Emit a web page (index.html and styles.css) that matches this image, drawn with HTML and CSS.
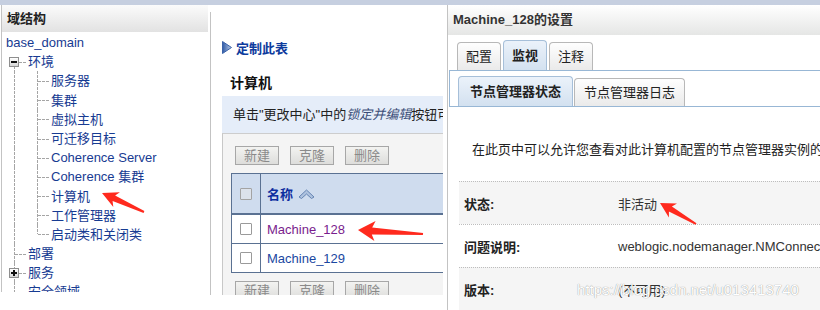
FILE: index.html
```html
<!DOCTYPE html>
<html>

<head>
  <meta charset="utf-8">
  <title>Machine_128的设置</title>
  <link rel="stylesheet" href="styles.css">
</head>

<body>
  <div class="console-top"></div>
  <div class="console">

    <div class="domain-tree">
      <h2 class="domain-tree-header">域结构</h2>
      <ul class="tree">
        <li class="tree-row"><a class="tree-root">base_domain</a></li>
        <li class="tree-row"><span class="tree-indent"></span><span class="tree-join tree-first"><span class="tree-box tree-minus"></span></span><a>环境</a></li>
        <li class="tree-row"><span class="tree-indent"></span><span class="tree-pipe"></span><span class="tree-join"></span><a>服务器</a></li>
        <li class="tree-row"><span class="tree-indent"></span><span class="tree-pipe"></span><span class="tree-join"></span><a>集群</a></li>
        <li class="tree-row"><span class="tree-indent"></span><span class="tree-pipe"></span><span class="tree-join"></span><a>虚拟主机</a></li>
        <li class="tree-row"><span class="tree-indent"></span><span class="tree-pipe"></span><span class="tree-join"></span><a>可迁移目标</a></li>
        <li class="tree-row"><span class="tree-indent"></span><span class="tree-pipe"></span><span class="tree-join"></span><a>Coherence Server</a></li>
        <li class="tree-row"><span class="tree-indent"></span><span class="tree-pipe"></span><span class="tree-join"></span><a>Coherence 集群</a></li>
        <li class="tree-row"><span class="tree-indent"></span><span class="tree-pipe"></span><span class="tree-join"></span><a>计算机</a></li>
        <li class="tree-row"><span class="tree-indent"></span><span class="tree-pipe"></span><span class="tree-join"></span><a>工作管理器</a></li>
        <li class="tree-row"><span class="tree-indent"></span><span class="tree-pipe"></span><span class="tree-join tree-last"></span><a>启动类和关闭类</a></li>
        <li class="tree-row"><span class="tree-indent"></span><span class="tree-join"></span><a>部署</a></li>
        <li class="tree-row"><span class="tree-indent"></span><span class="tree-join"><span class="tree-box tree-plus"></span></span><a>服务</a></li>
        <li class="tree-row"><span class="tree-indent"></span><span class="tree-join"></span><a>安全领域</a></li>
      </ul>
    </div>

    <div class="table-pane">
      <div class="customize">
        <svg width="10" height="13" viewBox="0 0 10 13">
          <defs>
            <linearGradient id="tri" x1="0" y1="0" x2="1" y2="0">
              <stop offset="0" stop-color="#2f5aa6" />
              <stop offset="1" stop-color="#b9cbe6" />
            </linearGradient>
          </defs>
          <polygon points="0.5,0.5 9.5,6.5 0.5,12.5" fill="url(#tri)" stroke="#3a62a9" stroke-width="1" />
        </svg>
        定制此表
      </div>
      <div class="table-title">计算机</div>
      <div class="table-body">
        <div class="info-bar">单击&quot;更改中心&quot;中的<em>锁定并编辑</em>按钮可以修改此表中的设置</div>
        <div class="table-panel">
          <div class="buttons">
            <button>新建</button>
            <button>克隆</button>
            <button>删除</button>
          </div>
          <div class="grid">
            <div class="grid-head">
              <div class="grid-check"><span class="check check-off"></span></div>
              <div class="grid-name">名称
                <svg class="sort" width="17" height="10" viewBox="0 0 17 10">
                  <path d="M1 8 L8.5 1 L16 8 L13.5 9.5 L8.5 5 L3.5 9.5 Z" fill="#aec2de" stroke="#6685b3" stroke-width="1" stroke-linejoin="round" />
                </svg>
              </div>
            </div>
            <div class="grid-row">
              <div class="grid-check"><span class="check"></span></div>
              <div class="grid-name"><a class="visited">Machine_128</a></div>
            </div>
            <div class="grid-row">
              <div class="grid-check"><span class="check"></span></div>
              <div class="grid-name"><a>Machine_129</a></div>
            </div>
          </div>
          <div class="buttons">
            <button>新建</button>
            <button>克隆</button>
            <button>删除</button>
          </div>
        </div>
      </div>
    </div>

    <div class="settings-pane">
      <div class="settings-header">Machine_128的设置</div>
      <div class="tabs">
        <div class="tab">配置</div>
        <div class="tab tab-active">监视</div>
        <div class="tab">注释</div>
      </div>
      <div class="subtabs">
        <div class="subtab subtab-active">节点管理器状态</div>
        <div class="subtab">节点管理器日志</div>
      </div>
      <div class="settings-intro">在此页中可以允许您查看对此计算机配置的节点管理器实例的状态。</div>
      <div class="props">
        <div class="prop prop-alt"><span class="prop-label">状态:</span><span>非活动</span></div>
        <div class="prop"><span class="prop-label">问题说明:</span><span>weblogic.nodemanager.NMConnectException</span></div>
        <div class="prop prop-alt"><span class="prop-label">版本:</span><span>(不可用)</span></div>
      </div>
    </div>

  </div>

  <div class="watermark">https://blog.csdn.net/u013413740</div>

  <svg class="marks" width="820" height="310" viewBox="0 0 820 310">
    <polygon points="102,193 119.9,192.3 115.1,195.6 144.4,211.1 143.6,212.9 112.6,201.1 113.3,206.9" />
    <polygon points="358,230 375.6,221.1 372.2,227.4 423.1,233 422.9,235 371.8,234.4 374.4,241" />
    <polygon points="660,203 677,203.6 671.9,206.5 696.5,223.2 695.5,224.8 668.9,211.6 668.9,217.5" />
  </svg>
</body>

</html>
```

FILE: styles.css
```css
html,body { padding: 0; margin: 0; }

body {
  position: relative;
  width: 820px;
  height: 310px;
  overflow: hidden;
  background: #fff;
  color: #222;
  font-family: "Liberation Sans", "Noto Sans CJK SC", sans-serif;
  font-size: 13px;
}

a {
  color: #173b92;
  text-decoration: none;
}

.console-top {
  height: 5px;
  background: #c6cfe0;
}

.console {
  display: flex;
  align-items: flex-start;
}

/* domain tree */

.domain-tree {
  margin-left: 1px;
  width: 206px;
  height: 287px;
  border-left: 1px solid #c3c3c3;
  overflow: hidden;
}

.domain-tree-header {
  margin: 0;
  height: 27px;
  line-height: 27px;
  padding-left: 5px;
  font-size: 13px;
  font-weight: bold;
  color: #222;
  background: linear-gradient(#fbfbfb, #e2e2e2);
}

.tree {
  list-style: none;
  margin: 0;
  padding: 1px 0 0 0;
}

.tree-row {
  display: flex;
  height: 19.2px;
  line-height: 19px;
  white-space: nowrap;
}

.tree-root {
  padding-left: 4px;
}

.tree-indent {
  flex: none;
  width: 12px;
}

.tree-pipe,
.tree-join {
  flex: none;
  position: relative;
}

.tree-pipe { width: 23px; }
.tree-join { width: 14px; }

.tree-pipe::before,
.tree-join::before {
  content: "";
  position: absolute;
  left: 0;
  top: 0;
  bottom: 0;
  width: 1px;
  background: repeating-linear-gradient(to bottom, #a5a5a5 0 3px, transparent 3px 4px);
}

.tree-join::after {
  content: "";
  position: absolute;
  left: 1px;
  width: 11px;
  top: 50%;
  height: 1px;
  background: repeating-linear-gradient(to right, #a5a5a5 0 3px, transparent 3px 4px);
}

.tree-first::before { top: 50%; }
.tree-last::before { bottom: 50%; }

.tree-box {
  position: absolute;
  z-index: 1;
  left: -5px;
  top: calc(50% - 5px);
  width: 10px;
  height: 10px;
  box-sizing: border-box;
  border: 1px solid #8e8e8e;
  background: linear-gradient(#fff, #d6d6d6);
}

.tree-box::before {
  content: "";
  position: absolute;
  left: 1px;
  right: 1px;
  top: 3px;
  height: 2px;
  background: #111;
}

.tree-plus::after {
  content: "";
  position: absolute;
  top: 1px;
  bottom: 1px;
  left: 3px;
  width: 2px;
  background: #111;
}

/* machine table */

.table-pane {
  margin-left: 2px;
  margin-top: 7px;
  width: 236px;
  height: 283px;
  border-left: 1px solid #c3c3c3;
}

.customize {
  display: flex;
  align-items: center;
  gap: 4px;
  margin: 27px 0 0 11px;
  height: 16px;
  font-weight: bold;
  color: #0e3b9d;
}

.table-title {
  margin: 19px 0 0 19px;
  font-size: 14px;
  line-height: 18px;
  font-weight: bold;
  color: #111;
}

.table-body {
  margin: 4px 0 0 11px;
  width: 221px;
}

.info-bar {
  height: 37px;
  line-height: 37px;
  padding-left: 11px;
  background: #e5edf9;
  white-space: nowrap;
  overflow: hidden;
}

.info-bar em {
  color: #3b4d78;
}

.table-panel {
  box-sizing: border-box;
  height: 162px;
  padding: 12px 0 0 8px;
  border-top: 1px solid #cdcdcd;
  border-left: 1px solid #c8c8c8;
  background: #f4f4f4;
  overflow: hidden;
}

.buttons {
  display: flex;
  gap: 11px;
  padding-left: 4px;
}

.buttons button {
  width: 44px;
  height: 19px;
  padding: 0;
  border: 1px solid #a7a7a7;
  background: linear-gradient(#f3f3f1, #dddddb);
  color: #8a8a8a;
  font: inherit;
  line-height: 17px;
}

.grid {
  width: 400px;
  margin: 8px 0;
  border: 1px solid #5a7192;
}

.grid-head {
  display: flex;
  height: 39px;
  background: #cfdcee;
  border-bottom: 2px solid #5a7192;
}

.grid-row {
  display: flex;
  height: 28px;
  background: #fff;
}

.grid-row + .grid-row {
  border-top: 1px solid #5a7192;
}

.grid-check {
  flex: none;
  width: 28px;
  border-right: 1px solid #5a7192;
  display: flex;
  align-items: center;
  justify-content: center;
}

.grid-name {
  display: flex;
  align-items: center;
  padding-left: 6px;
  white-space: nowrap;
}

.grid-head .grid-name {
  font-weight: bold;
  color: #0d2ea0;
}

.grid-name a { color: #1a47a1; }
.grid-name a.visited { color: #7a1c8d; }

.sort {
  margin-left: 5px;
}

.check {
  width: 12px;
  height: 12px;
  box-sizing: border-box;
  border: 1px solid #9a9a9a;
  border-radius: 1px;
  background: #fff;
}

.check-off {
  background: #dce2eb;
  border-color: #a3a3a3;
}

/* settings */

.settings-pane {
  flex: 1;
  height: 305px;
  border-left: 1px solid #c3c3c3;
  overflow: hidden;
}

.settings-header {
  height: 30px;
  line-height: 30px;
  padding-left: 5px;
  font-weight: bold;
  color: #333;
  background: linear-gradient(#fff, #e5e6e5);
}

.tabs {
  display: flex;
  align-items: flex-end;
  gap: 2px;
  height: 30px;
  padding: 5px 0 0 9px;
}

.tab,
.subtab {
  box-sizing: border-box;
  height: 28px;
  line-height: 27px;
  border: 1px solid #b8b8b8;
  border-bottom: none;
  border-radius: 4px 4px 0 0;
  background: linear-gradient(#fefefe, #eaeaea);
  white-space: nowrap;
}

.tab { padding: 0 8px; }

.tab-active,
.subtab-active {
  height: 30px;
  line-height: 29px;
  font-weight: bold;
  border-color: #a6bfd9;
  background: linear-gradient(#ebf2fa, #d3e1f0);
}

.subtabs {
  display: flex;
  align-items: flex-end;
  gap: 1px;
  height: 30px;
  margin-left: 1px;
  padding: 5px 0 0 8px;
  border: 1px solid #98b7d5;
  border-right: none;
}

.subtab { padding: 0 9px; }
.subtab-active { padding: 0 11px; }

.settings-intro {
  margin: 35px 0 0 24px;
  line-height: 16px;
  white-space: nowrap;
}

.props {
  margin: 23px 0 0 11px;
}

.prop {
  display: flex;
  align-items: center;
  height: 42px;
  border-top: 1px dotted #bdbdbd;
  white-space: nowrap;
  color: #333;
}

.prop-alt {
  background: #f5f5f5;
}

.prop-label {
  flex: none;
  width: 154px;
  padding-left: 5px;
  font-weight: bold;
  color: #222;
}

/* overlays */

.watermark {
  position: absolute;
  left: 577px;
  top: 281px;
  font-size: 15px;
  line-height: 18px;
  color: #fff;
  text-shadow: 0 0 1px rgba(0, 0, 0, 0.35), 0 0 1px rgba(0, 0, 0, 0.2);
  white-space: nowrap;
}

.marks {
  position: absolute;
  left: 0;
  top: 0;
  pointer-events: none;
}

.marks polygon {
  fill: #ff2a1e;
}
```
